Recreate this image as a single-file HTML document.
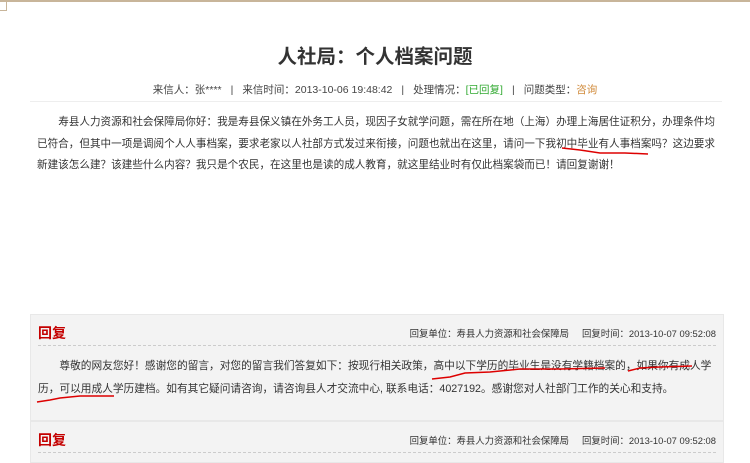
<html><head><style>
body{margin:0;width:750px;height:453px;background:#fff;font-family:"Liberation Sans","Noto Sans CJK SC",sans-serif;color:#333;position:relative;overflow:hidden}
.top{position:absolute;left:0;top:0;width:750px;height:2px;background:#c8b59a}
.corner{position:absolute;left:0;top:2px;width:6px;height:8px;border:1px solid #c8b59a;border-top:none;border-left:none}
h1{position:absolute;top:40px;left:0;width:750px;text-align:center;font-size:19.5px;margin:0;font-weight:bold;color:#333}
.meta{position:absolute;top:82px;left:0;width:750px;text-align:center;font-size:10.5px;color:#444}
.meta span{margin:0 9px}
.sep{position:absolute;top:101px;left:30px;width:692px;height:1px;background:#eee}
.body{position:absolute;top:112px;left:37px;width:680px;font-size:10.6px;line-height:21.5px;text-indent:2em;color:#333}
.box{position:absolute;left:30px;width:692px;background:#f3f3f3;border:1px solid #e8e8e8}
.h{height:30px;border-bottom:1px dashed #ccc;margin:0 7px;position:relative}
.h b{position:absolute;left:0;top:8px;color:#c40000;font-size:14px}
.h i{position:absolute;right:0;top:11px;font-style:normal;font-size:9.4px;color:#333}
.t{font-size:10.7px;line-height:23px;text-indent:2em;padding:9px 7px 14px;color:#333}
</style></head><body>
<div class="top"></div><div class="corner"></div>
<h1>人社局：个人档案问题</h1>
<div class="meta">来信人：张****<span>|</span>来信时间：2013-10-06 19:48:42<span>|</span>处理情况：<font color="#3a3">[已回复]</font><span>|</span>问题类型：<font color="#d08a3a">咨询</font></div>
<div class="sep"></div>
<div class="body">寿县人力资源和社会保障局你好：我是寿县保义镇在外务工人员，现因子女就学问题，需在所在地（上海）办理上海居住证积分，办理条件均已符合，但其中一项是调阅个人人事档案，要求老家以人社部方式发过来衔接，问题也就出在这里，请问一下我初中毕业有人事档案吗？这边要求新建该怎么建？该建些什么内容？我只是个农民，在这里也是读的成人教育，就这里结业时有仅此档案袋而已！请回复谢谢！</div>
<div class="box" style="top:314px;height:105px">
<div class="h"><b>回复</b><i>回复单位：寿县人力资源和社会保障局&nbsp;&nbsp;&nbsp;&nbsp;&nbsp;回复时间：2013-10-07 09:52:08</i></div>
<div class="t">尊敬的网友您好！感谢您的留言，对您的留言我们答复如下：按现行相关政策，高中以下学历的毕业生是没有学籍档案的，如果你有成人学历，可以用成人学历建档。如有其它疑问请咨询，请咨询县人才交流中心, 联系电话：4027192。感谢您对人社部门工作的关心和支持。</div>
</div>
<div class="box" style="top:421px;height:40px">
<div class="h"><b>回复</b><i>回复单位：寿县人力资源和社会保障局&nbsp;&nbsp;&nbsp;&nbsp;&nbsp;回复时间：2013-10-07 09:52:08</i></div>
</div>
<svg style="position:absolute;left:0;top:0" width="750" height="453"><g stroke="#d00" stroke-width="1.5" fill="none">
<path d="M562 148 L580 150 L600 153 L625 153 L648 154"/>
<path d="M432 379 L450 377 L465 373 L490 372 L520 369 L560 369 L605 368"/>
<path d="M628 371 L640 368 L660 367 L692 366"/>
<path d="M37 402 L50 400 L60 398 L80 396 L114 396"/>
</g></svg>
</body></html>
